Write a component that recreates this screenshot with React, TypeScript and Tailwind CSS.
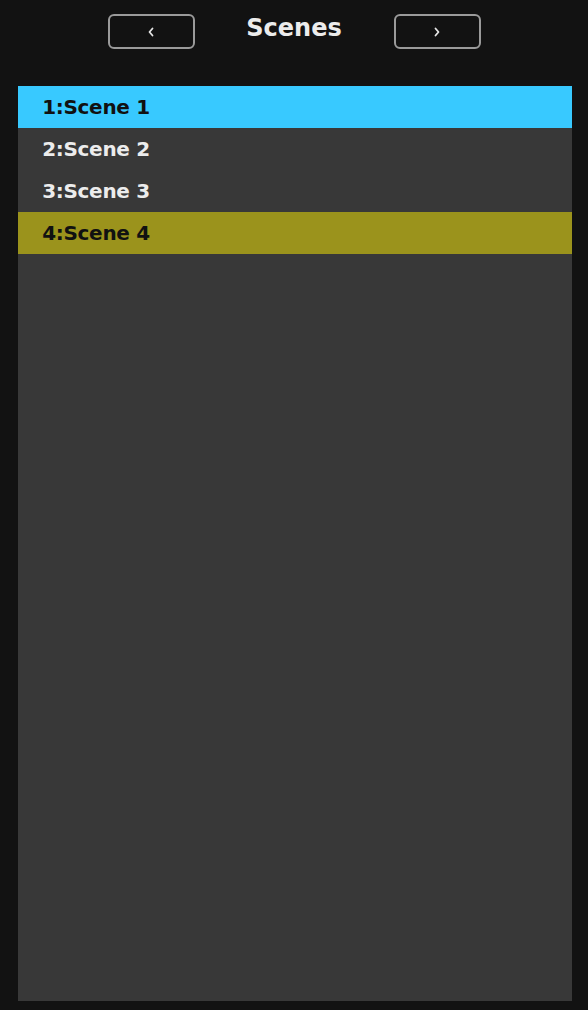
const scenes = [
  { id: 1, name: "Scene 1", bg: "bg-[#38c9ff]", text: "text-[#111111]" },
  { id: 2, name: "Scene 2", bg: "", text: "text-[#ececec]" },
  { id: 3, name: "Scene 3", bg: "", text: "text-[#ececec]" },
  { id: 4, name: "Scene 4", bg: "bg-[#9b931c]", text: "text-[#111111]" },
];

function NavButton({ dir }: { dir: "prev" | "next" }) {
  return (
    <button className="w-[87px] h-[35px] rounded-[6px] border-2 border-[#9a9a9a] flex items-center justify-center">
      <svg width="8" height="12" viewBox="0 0 8 12" fill="none">
        <path
          d={dir === "prev" ? "M5.5 2.5 L2.5 6 L5.5 9.5" : "M2.5 2.5 L5.5 6 L2.5 9.5"}
          stroke="#e5e5e5"
          strokeWidth="1.8"
          strokeLinecap="round"
          strokeLinejoin="round"
        />
      </svg>
    </button>
  );
}

export default function App() {
  return (
    <div
      className="w-[588px] h-[1010px] bg-[#121212] flex flex-col"
      style={{ fontFamily: '"DejaVu Sans", "Open Sans", sans-serif' }}
    >
      <div className="h-[86px] flex items-start justify-center pt-[14px]">
        <NavButton dir="prev" />
        <h1 className="w-[199px] text-center text-[24px] font-bold text-[#ececec] leading-[28px]">Scenes</h1>
        <NavButton dir="next" />
      </div>
      <div className="ml-[18px] w-[554px] h-[915px] bg-[#383838]">
        {scenes.map((s) => (
          <div key={s.id} className={`h-[42px] flex items-center ${s.bg}`}>
            <span className={`w-[156px] text-center text-[20px] font-bold tracking-[-0.3px] ${s.text}`}>
              {s.id}:{s.name}
            </span>
          </div>
        ))}
      </div>
    </div>
  );
}
